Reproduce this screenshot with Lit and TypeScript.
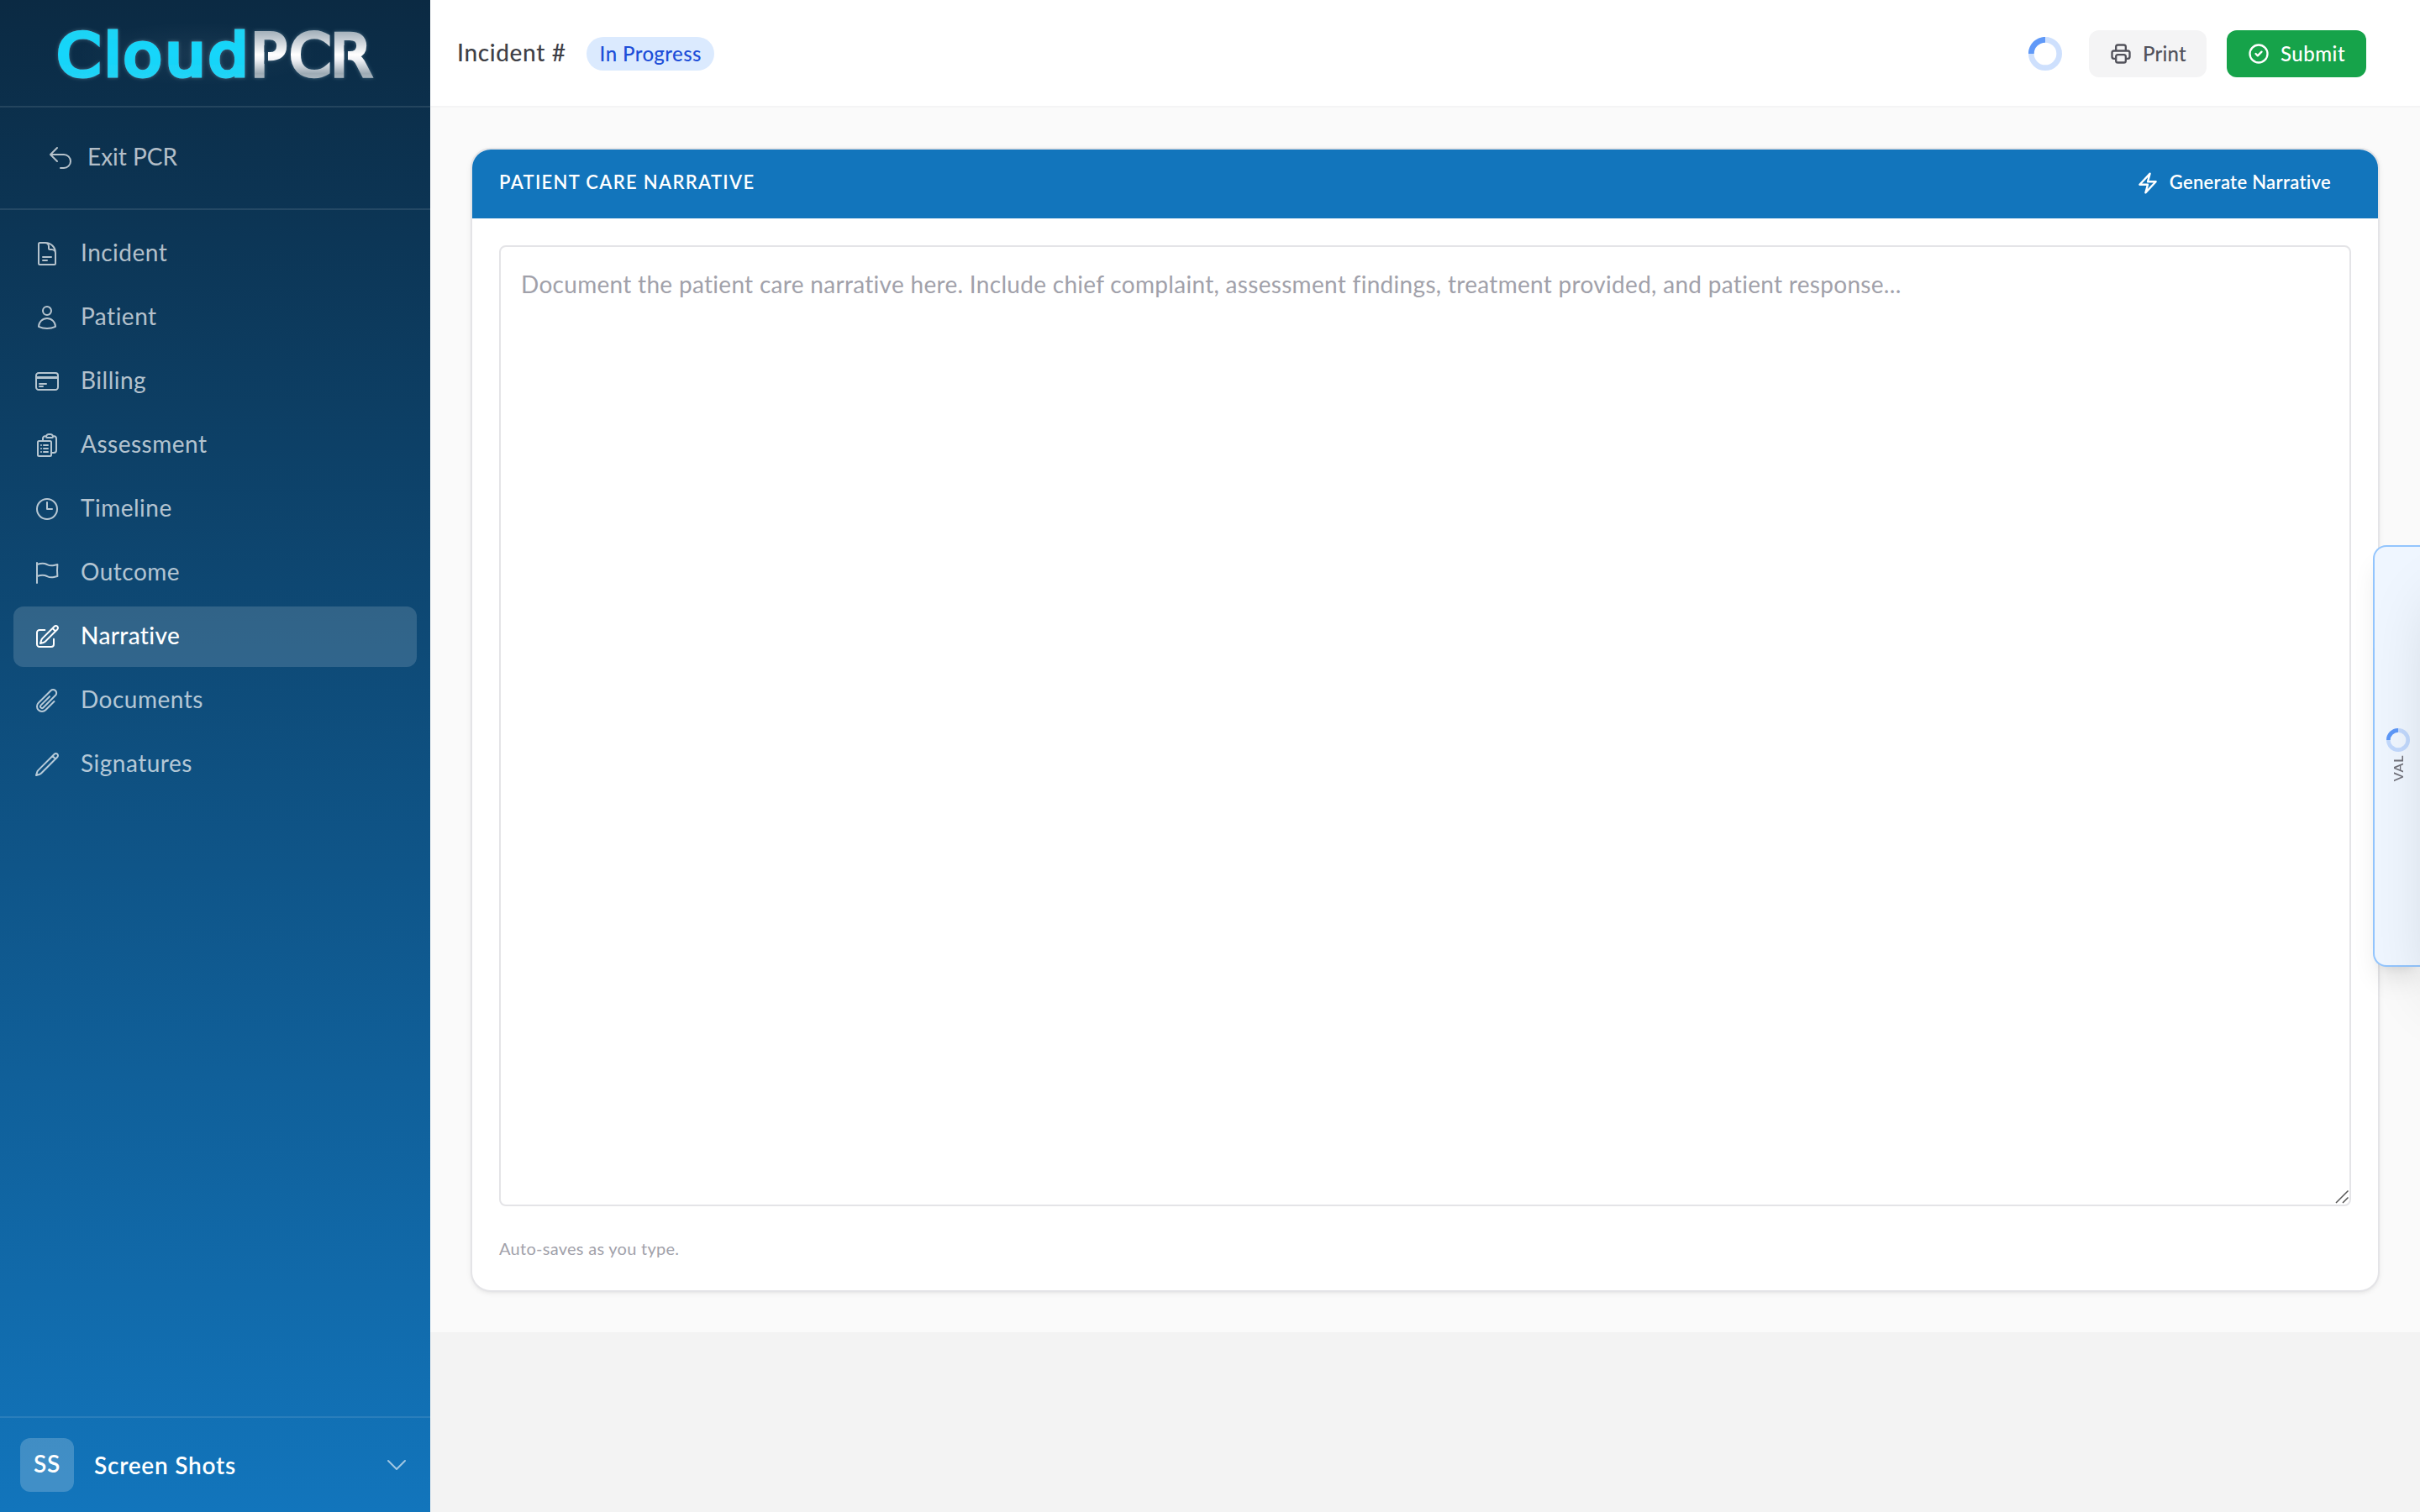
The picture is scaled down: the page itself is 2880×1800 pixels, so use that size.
import { LitElement, html, svg, css } from "lit";
import { customElement } from "lit/decorators.js";
import { classMap } from "lit/directives/class-map.js";

const ICONS: Record<string, string> = {
  exit: "M9 15 3 9m0 0 6-6M3 9h12a6 6 0 0 1 0 12h-3",
  incident:
    "M19.5 14.25v-2.625a3.375 3.375 0 0 0-3.375-3.375h-1.5A1.125 1.125 0 0 1 13.5 7.125v-1.5a3.375 3.375 0 0 0-3.375-3.375H8.25m0 12.75h7.5m-7.5 3H12M10.5 2.25H5.625c-.621 0-1.125.504-1.125 1.125v17.25c0 .621.504 1.125 1.125 1.125h12.75c.621 0 1.125-.504 1.125-1.125V11.25a9 9 0 0 0-9-9Z",
  patient:
    "M15.75 6a3.75 3.75 0 1 1-7.5 0 3.75 3.75 0 0 1 7.5 0ZM4.501 20.118a7.5 7.5 0 0 1 14.998 0A17.933 17.933 0 0 1 12 21.75c-2.676 0-5.216-.584-7.499-1.632Z",
  billing:
    "M2.25 8.25h19.5M2.25 9h19.5m-16.5 5.25h6m-6 2.25h3m-3.75 3h15a2.25 2.25 0 0 0 2.25-2.25V6.75A2.25 2.25 0 0 0 19.5 4.5h-15a2.25 2.25 0 0 0-2.25 2.25v10.5A2.25 2.25 0 0 0 4.5 19.5Z",
  assessment:
    "M9 12h3.75M9 15h3.75M9 18h3.75m3 .75H18a2.25 2.25 0 0 0 2.25-2.25V6.108c0-1.135-.845-2.098-1.976-2.192a48.424 48.424 0 0 0-1.123-.08m-5.801 0c-.065.21-.1.433-.1.664 0 .414.336.75.75.75h4.5a.75.75 0 0 0 .75-.75 2.25 2.25 0 0 0-.1-.664m-5.8 0A2.251 2.251 0 0 1 13.5 2.25H15c1.012 0 1.867.668 2.15 1.586m-5.8 0c-.376.023-.75.05-1.124.08C9.095 4.01 8.25 4.973 8.25 6.108V8.25m0 0H4.875c-.621 0-1.125.504-1.125 1.125v11.25c0 .621.504 1.125 1.125 1.125h9.75c.621 0 1.125-.504 1.125-1.125V9.375c0-.621-.504-1.125-1.125-1.125H8.25ZM6.75 12h.008v.008H6.75V12Zm0 3h.008v.008H6.75V15Zm0 3h.008v.008H6.75V18Z",
  timeline: "M12 6v6h4.5m4.5 0a9 9 0 1 1-18 0 9 9 0 0 1 18 0Z",
  outcome:
    "M3 3v1.5M3 21v-6m0 0 2.77-.693a9 9 0 0 1 6.208.682l.108.054a9 9 0 0 0 6.086.71l3.114-.732a48.524 48.524 0 0 1-.005-10.499l-3.11.732a9 9 0 0 1-6.085-.711l-.108-.054a9 9 0 0 0-6.208-.682L3 4.5M3 15V4.5",
  narrative:
    "m16.862 4.487 1.687-1.688a1.875 1.875 0 1 1 2.652 2.652L10.582 16.07a4.5 4.5 0 0 1-1.897 1.13L6 18l.8-2.685a4.5 4.5 0 0 1 1.13-1.897l8.932-8.931Zm0 0L19.5 7.125M18 14v4.75A2.25 2.25 0 0 1 15.75 21H5.25A2.25 2.25 0 0 1 3 18.75V8.25A2.25 2.25 0 0 1 5.25 6H10",
  documents:
    "m18.375 12.739-7.693 7.693a4.5 4.5 0 0 1-6.364-6.364l10.94-10.94A3 3 0 1 1 19.5 7.372L8.552 18.32m.009-.01-.01.01m5.699-9.941-7.81 7.81a1.5 1.5 0 0 0 2.112 2.13",
  signatures:
    "m16.862 4.487 1.687-1.688a1.875 1.875 0 1 1 2.652 2.652L6.832 19.82a4.5 4.5 0 0 1-1.897 1.13l-2.685.8.8-2.685a4.5 4.5 0 0 1 1.13-1.897L16.863 4.487Zm0 0L19.5 7.125",
  chevron: "m19.5 8.25-7.5 7.5-7.5-7.5",
  bolt: "m3.75 13.5 10.5-11.25L12 10.5h8.25L9.75 21.75 12 13.5H3.75Z",
  printer:
    "M17 17h2a2 2 0 0 0 2-2v-4a2 2 0 0 0-2-2H5a2 2 0 0 0-2 2v4a2 2 0 0 0 2 2h2M17 9V5a2 2 0 0 0-2-2H9a2 2 0 0 0-2 2v4M7 15a2 2 0 0 1 2-2h6a2 2 0 0 1 2 2v4a2 2 0 0 1-2 2H9a2 2 0 0 1-2-2z",
  check: "M3 12a9 9 0 1 0 18 0a9 9 0 1 0-18 0M9 12l2 2l4-4",
};

const icon = (name: string, size: number, stroke = 1.5) => html`
  <svg class="icon" width=${size} height=${size} viewBox="0 0 24 24" fill="none" stroke="currentColor"
    stroke-width=${stroke} stroke-linecap="round" stroke-linejoin="round">${svg`<path d=${ICONS[name]}></path>`}</svg>`;

const spinner = (size: number) => html`
  <svg class="spinner" width=${size} height=${size} viewBox="0 0 24 24" fill="none">
    <circle cx="12" cy="12" r="10" stroke="currentColor" stroke-width="4" opacity=".25"></circle>
    <path d="M4 12a8 8 0 0 1 8-8V0C5.373 0 0 5.373 0 12h4z" fill="currentColor" opacity=".75"></path>
  </svg>`;

const NAV = ["Incident", "Patient", "Billing", "Assessment", "Timeline", "Outcome", "Narrative", "Documents", "Signatures"];

@customElement("app-root")
class AppRoot extends LitElement {
  static styles = css`
    :host {
      display: block;
      position: relative;
      height: 1800px;
      overflow: hidden;
      font-family: Lato, "Open Sans", sans-serif;
      font-variant-ligatures: none;
      color: #3f3f46;
    }
    * { box-sizing: border-box; }
    svg { display: block; flex: none; }
    .layout { display: grid; grid-template-columns: 512px 1fr; height: 100%; overflow: hidden; background: #f3f3f3; }
    .sidebar { display: flex; flex-direction: column; color: rgba(255, 255, 255, 0.7); background: linear-gradient(#0b2a43, #1275bc); }
    .brand { height: 128px; border-bottom: 2px solid rgba(255, 255, 255, 0.1); }
    .exit { display: flex; align-items: center; gap: 16px; height: 122px; padding: 0 56px; border-bottom: 2px solid rgba(255, 255, 255, 0.1); font-size: 28px; }
    .exit span { padding-bottom: 4px; }
    nav { display: flex; flex-direction: column; gap: 4px; padding: 16px; flex: 1; }
    .item { display: flex; align-items: center; gap: 24px; height: 72px; padding: 0 24px; border-radius: 12px; font-size: 28px; letter-spacing: 0.5px; }
    .item span { padding-bottom: 4px; }
    .item.active { background: rgba(255, 255, 255, 0.15); color: #fff; font-weight: 500; letter-spacing: 0.35px; }
    .user { display: flex; align-items: center; height: 114px; padding: 0 24px; border-top: 2px solid rgba(255, 255, 255, 0.1); color: #fff; }
    .avatar { display: grid; place-items: center; width: 64px; height: 64px; padding-bottom: 4px; border-radius: 12px; background: rgba(255, 255, 255, 0.2); font-size: 28px; font-weight: 600; letter-spacing: 0.7px; }
    .user-name { flex: 1; margin-left: 24px; padding-bottom: 0; font-size: 28px; font-weight: 600; letter-spacing: 0.75px; }
    .user .icon { opacity: 0.6; }
    header { display: flex; align-items: center; height: 128px; padding: 2px 64px 0 32px; background: #fff; border-bottom: 2px solid #f4f4f5; }
    .title { font-size: 28px; font-weight: 500; letter-spacing: 0.65px; padding-bottom: 4px; }
    .badge { display: flex; align-items: center; height: 40px; width: 152px; margin-left: 24px; padding: 0 0 2px 16px; border-radius: 20px; background: #dbeafe; color: #1d4ed8; font-size: 24px; font-weight: 500; letter-spacing: 0.4px; white-space: nowrap; }
    .actions { display: flex; align-items: center; gap: 24px; margin-left: auto; }
    .actions .spinner { margin-right: 8px; }
    .spinner { color: #3b82f6; }
    .button { display: flex; align-items: center; gap: 12px; height: 56px; padding: 0 24px; border-radius: 12px; font-size: 24px; font-weight: 500; }
    .button span { padding-bottom: 1px; }
    .print { width: 140px; background: #f4f4f5; color: #52525b; letter-spacing: 0.2px; }
    .submit { width: 166px; background: #16a34a; color: #fff; letter-spacing: 0.5px; }
    .content { height: 1458px; padding: 48px; background: #fafafa; }
    .card { display: flex; flex-direction: column; height: 1362px; border: 2px solid #e4e4e7; border-radius: 24px; overflow: hidden; background: #fff; box-shadow: 0 2px 6px rgba(0, 0, 0, 0.06), 0 2px 4px -2px rgba(0, 0, 0, 0.06); }
    .card-head { display: flex; align-items: center; justify-content: space-between; height: 82px; padding: 0 56px 2px 32px; background: #1275bc; color: #fff; font-size: 22px; font-weight: 600; }
    .card-title { padding-bottom: 4px; letter-spacing: 1.32px; }
    .generate { display: flex; align-items: center; gap: 12px; letter-spacing: 0.32px; }
    .generate span { padding-bottom: 4px; }
    .card-body { display: flex; flex-direction: column; padding: 32px; }
    .field { position: relative; }
    .grip { position: absolute; right: 2px; bottom: 2px; }
    textarea { display: block; width: 100%; height: 1144px; padding: 22px 24px 24px; border: 2px solid #e4e4e7; border-radius: 8px; outline: none; background: #fff; resize: none; font: 400 28px/44px Lato, "Open Sans", sans-serif; letter-spacing: 0.3px; color: #3f3f46; }
    textarea::placeholder { color: #a1a1aa; opacity: 1; }
    .hint { margin-top: 35px; font-size: 20px; line-height: 30px; letter-spacing: 0.28px; color: #a1a1aa; }
    .validation { position: absolute; top: 649px; right: 0; width: 56px; height: 502px; display: flex; flex-direction: column; align-items: center; justify-content: center; gap: 4px; padding: 0 0 2px 2px; border: 2px solid #93c5fd; border-right: 0; border-radius: 16px 0 0 16px; background: #eff6ff; box-shadow: 0 20px 30px -6px rgba(0, 0, 0, 0.1), 0 8px 12px -8px rgba(0, 0, 0, 0.1); }
    .validation::after { content: ""; position: absolute; top: -2px; left: 100%; width: 500px; height: 502px; box-shadow: 0 50px 76px -20px rgba(0, 0, 0, 0.16); }
    .validation .label { writing-mode: vertical-rl; transform: rotate(180deg); font-size: 16px; line-height: 20px; font-weight: 600; letter-spacing: 0.6px; color: #71717a; }
    .wordmark { font-family: "DejaVu Sans", sans-serif; font-weight: 400; }
  `;

  render() {
    return html`
      <div class="layout">
        <aside class="sidebar">
          <div class="brand">
            <svg width="512" height="126" viewBox="0 0 512 126">
              <defs>
                <linearGradient id="chrome" x1="0" y1="37" x2="0" y2="93" gradientUnits="userSpaceOnUse">
                  <stop offset="0" stop-color="#a3b0ba"></stop>
                  <stop offset=".3" stop-color="#d9dee3"></stop>
                  <stop offset=".5" stop-color="#ffffff"></stop>
                  <stop offset=".62" stop-color="#eef0f4"></stop>
                  <stop offset=".9" stop-color="#9eabb5"></stop>
                  <stop offset="1" stop-color="#a9b5be"></stop>
                </linearGradient>
                <linearGradient id="cyan" x1="0" y1="34" x2="0" y2="93" gradientUnits="userSpaceOnUse">
                  <stop offset="0" stop-color="#1fd3f3"></stop>
                  <stop offset=".5" stop-color="#12d6fb"></stop>
                  <stop offset="1" stop-color="#22d3f5"></stop>
                </linearGradient>
                <radialGradient id="halo">
                  <stop offset="0" stop-color="#ffffff" stop-opacity=".05"></stop>
                  <stop offset="1" stop-color="#ffffff" stop-opacity="0"></stop>
                </radialGradient>
                <filter id="glow" x="-10%" y="-30%" width="120%" height="160%">
                  <feDropShadow dx="0" dy="0" stdDeviation="2" flood-color="#bfe4f5" flood-opacity=".3"></feDropShadow>
                </filter>
                <mask id="cuts" maskUnits="userSpaceOnUse" x="280" y="0" width="200" height="126">
                  <rect x="280" y="0" width="200" height="126" fill="#fff"></rect>
                  <rect x="314.5" y="54" width="4.5" height="22" fill="#000"></rect>
                  <rect x="409.5" y="54" width="4.5" height="40" fill="#000"></rect>
                </mask>
              </defs>
              <rect x="90" y="26" width="290" height="76" fill="url(#halo)"></rect>
              <g class="wordmark" filter="url(#glow)">
                <text transform="scale(1.08 1)" x="62.6 114.6 135.8 182.3 229.4" y="90" font-size="69.5" fill="url(#cyan)" stroke="url(#cyan)" stroke-width="5">Cloud</text>
                <g mask="url(#cuts)">
                  <text transform="scale(1.02 1)" x="292.5 337.6 385.6" y="90.4" font-size="70" fill="url(#chrome)" stroke="url(#chrome)" stroke-width="4.5">PCR</text>
                </g>
              </g>
            </svg>
          </div>
          <div class="exit">${icon("exit", 32)}<span>Exit PCR</span></div>
          <nav>
            ${NAV.map((label) => html`
              <div class=${classMap({ item: true, active: label === "Narrative" })}>
                ${icon(label.toLowerCase(), 32)}<span>${label}</span>
              </div>`)}
          </nav>
          <div class="user">
            <div class="avatar">SS</div>
            <div class="user-name">Screen Shots</div>
            ${icon("chevron", 32)}
          </div>
        </aside>
        <main>
          <header>
            <div class="title">Incident #</div>
            <div class="badge">In Progress</div>
            <div class="actions">
              ${spinner(40)}
              <div class="button print">${icon("printer", 28, 2)}<span>Print</span></div>
              <div class="button submit">${icon("check", 28, 2)}<span>Submit</span></div>
            </div>
          </header>
          <section class="content">
            <div class="card">
              <div class="card-head">
                <div class="card-title">PATIENT CARE NARRATIVE</div>
                <div class="generate">${icon("bolt", 28, 2)}<span>Generate Narrative</span></div>
              </div>
              <div class="card-body">
                <div class="field">
                  <textarea placeholder="Document the patient care narrative here. Include chief complaint, assessment findings, treatment provided, and patient response..."></textarea>
                  <svg class="grip" width="18" height="18" viewBox="0 0 18 18" stroke="#555" stroke-width="1.5">
                    <path d="M2 16 16.5 1.5M10 16 16.5 9.5"></path>
                  </svg>
                </div>
                <div class="hint">Auto-saves as you type.</div>
              </div>
            </div>
          </section>
        </main>
      </div>
      <div class="validation">${spinner(28)}<span class="label">VAL</span></div>
    `;
  }
}
